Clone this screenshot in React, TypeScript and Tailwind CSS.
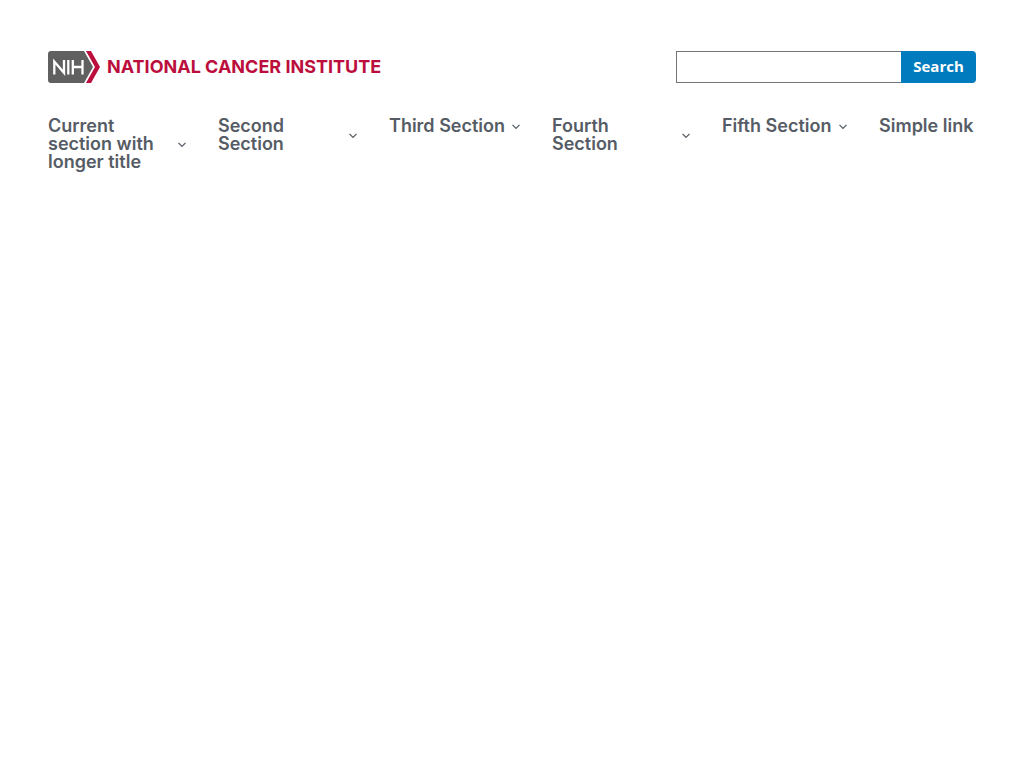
const sections = [
  'Current section with longer title',
  'Second Section',
  'Third Section',
  'Fourth Section',
  'Fifth Section',
];

function Chevron() {
  return (
    <svg className="size-2 shrink-0" viewBox="0 0 8 8" fill="none" aria-hidden="true">
      <path d="M0.5 2.9 L4 6.4 L7.5 2.9" stroke="#565c65" strokeWidth="1.3" />
    </svg>
  );
}

function Logo() {
  return (
    <a href="#" className="flex items-center gap-[7px] whitespace-nowrap">
      <svg className="h-8 w-[52px] shrink-0" viewBox="0 0 52 32" aria-hidden="true">
        <path d="M3 0H36L45 16L36 32H3Q0 32 0 29V3Q0 0 3 0Z" fill="#606060" />
        <path d="M38 0H43L52 16L43 32H38L47 16Z" fill="#bb0e3d" />
        <path
          d="M6.3 23.4V10.5L16 21.8V9M20.3 9V23.4M24.8 9V23.4M34.5 9V23.4M24.8 16H34.5"
          fill="none"
          stroke="#fff"
          strokeWidth="2.3"
        />
      </svg>
      <span className="font-['Inter','Liberation_Sans',sans-serif] text-[18px] font-bold leading-8 text-[#bb0e3d]">
        NATIONAL CANCER INSTITUTE
      </span>
    </a>
  );
}

export default function App() {
  return (
    <header className="bg-white px-12 pt-[51px] pb-8">
      <div className="flex items-center justify-between">
        <Logo />
        <form role="search" className="flex h-8 w-[300px]" onSubmit={(e) => e.preventDefault()}>
          <input
            type="search"
            aria-label="Search"
            className="min-w-0 flex-1 border border-r-0 border-[#71767a] bg-white px-2 font-['Open_Sans',sans-serif] text-base outline-none"
          />
          <button
            type="submit"
            className="w-[75px] rounded-r bg-[#007bbd] pb-0.5 font-['Open_Sans',sans-serif] text-[15px] font-bold text-white"
          >
            Search
          </button>
        </form>
      </div>
      <nav
        aria-label="Primary"
        className="mt-[34px] grid grid-cols-[138fr_139fr_131fr_138fr_125fr_97fr] items-start gap-8 font-['Inter','Liberation_Sans',sans-serif] text-[18px] font-semibold leading-[18px] text-[#565c65]"
      >
        {sections.map((title) => (
          <button
            key={title}
            type="button"
            aria-expanded="false"
            className="flex items-center justify-between gap-1 text-left"
          >
            <span>{title}</span>
            <Chevron />
          </button>
        ))}
        <a href="#" className="whitespace-nowrap">
          Simple link
        </a>
      </nav>
    </header>
  );
}
